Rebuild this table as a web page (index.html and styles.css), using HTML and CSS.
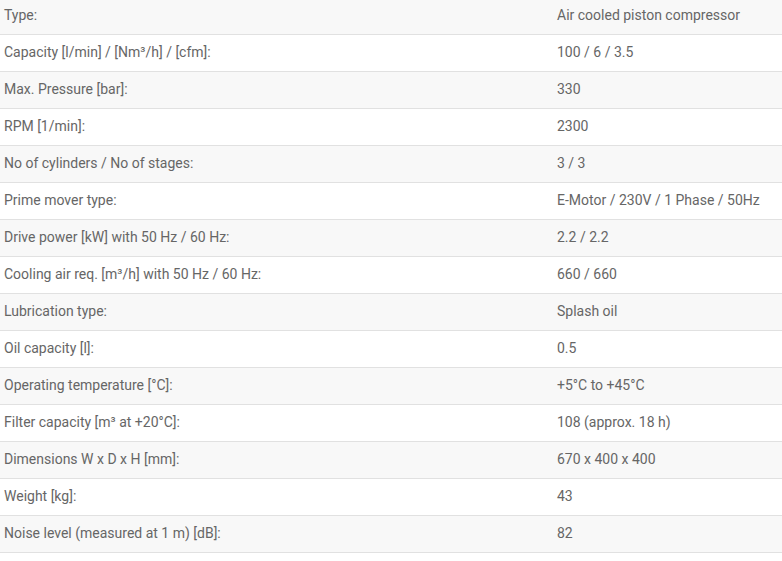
FILE: index.html
```html
<!DOCTYPE html>
<html>
<head>
<meta charset="utf-8">
<link rel="stylesheet" href="styles.css">
</head>
<body>
<table class="specs">
<colgroup><col class="c-label"><col class="c-value"></colgroup>
<tbody>
<tr><td>Type:</td><td>Air cooled piston compressor</td></tr>
<tr><td>Capacity [l/min] / [Nm³/h] / [cfm]:</td><td>100 / 6 / 3.5</td></tr>
<tr><td>Max. Pressure [bar]:</td><td>330</td></tr>
<tr><td>RPM [1/min]:</td><td>2300</td></tr>
<tr><td>No of cylinders / No of stages:</td><td>3 / 3</td></tr>
<tr><td>Prime mover type:</td><td>E-Motor / 230V / 1 Phase / 50Hz</td></tr>
<tr><td>Drive power [kW] with 50 Hz / 60 Hz:</td><td>2.2 / 2.2</td></tr>
<tr><td>Cooling air req. [m³/h] with 50 Hz / 60 Hz:</td><td>660 / 660</td></tr>
<tr><td>Lubrication type:</td><td>Splash oil</td></tr>
<tr><td>Oil capacity [l]:</td><td>0.5</td></tr>
<tr><td>Operating temperature [°C]:</td><td>+5°C to +45°C</td></tr>
<tr><td>Filter capacity [m³ at +20°C]:</td><td>108 (approx. 18 h)</td></tr>
<tr><td>Dimensions W x D x H [mm]:</td><td>670 x 400 x 400</td></tr>
<tr><td>Weight [kg]:</td><td>43</td></tr>
<tr><td>Noise level (measured at 1 m) [dB]:</td><td>82</td></tr>
</tbody>
</table>
</body>
</html>
```
FILE: styles.css
```css
html, body {
  margin: 0;
  padding: 0;
  background: #ffffff;
}
body {
  font-family: Roboto, "Liberation Sans", sans-serif;
  font-size: 14px;
  color: #666666;
}
.specs {
  width: 782px;
  border-collapse: collapse;
  table-layout: fixed;
  margin-top: -2px;
}
.c-label { width: 553px; }
.specs td {
  padding: 7px 4px 9px 4px;
  line-height: 20px;
  height: 20px;
  border-bottom: 1px solid #e1e1e1;
  vertical-align: middle;
  white-space: nowrap;
}
.specs tr:nth-child(odd) td {
  background: #f8f8f8;
}
```
